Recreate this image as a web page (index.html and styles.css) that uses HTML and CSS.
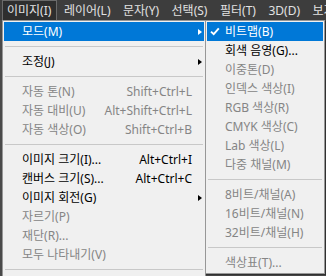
FILE: index.html
```html
<!DOCTYPE html>
<html lang="ko">
<head>
<meta charset="utf-8">
<link rel="stylesheet" href="styles.css">
</head>
<body>
<div class="app">
  <nav class="menubar">
    <span class="mb-item active">이미지(I)</span>
    <span class="mb-item">레이어(L)</span>
    <span class="mb-item">문자(Y)</span>
    <span class="mb-item">선택(S)</span>
    <span class="mb-item">필터(T)</span>
    <span class="mb-item">3D(D)</span>
    <span class="mb-item">보기(V)</span>
  </nav>
  <div class="workspace">
    <ul class="menu main">
      <li class="row hl"><span class="label">모드(M)</span><span class="key"></span><span class="arrow"></span></li>
      <li class="sep"></li>
      <li class="row"><span class="label">조정(J)</span><span class="key"></span><span class="arrow"></span></li>
      <li class="sep"></li>
      <li class="row dis"><span class="label">자동 톤(N)</span><span class="key">Shift+Ctrl+L</span><span></span></li>
      <li class="row dis"><span class="label">자동 대비(U)</span><span class="key">Alt+Shift+Ctrl+L</span><span></span></li>
      <li class="row dis"><span class="label">자동 색상(O)</span><span class="key">Shift+Ctrl+B</span><span></span></li>
      <li class="sep"></li>
      <li class="row"><span class="label">이미지 크기(I)...</span><span class="key">Alt+Ctrl+I</span><span></span></li>
      <li class="row"><span class="label">캔버스 크기(S)...</span><span class="key">Alt+Ctrl+C</span><span></span></li>
      <li class="row"><span class="label">이미지 회전(G)</span><span class="key"></span><span class="arrow"></span></li>
      <li class="row dis"><span class="label">자르기(P)</span><span class="key"></span><span></span></li>
      <li class="row dis"><span class="label">재단(R)...</span><span class="key"></span><span></span></li>
      <li class="row dis"><span class="label">모두 나타내기(V)</span><span class="key"></span><span></span></li>
      <li class="sep"></li>
    </ul>
    <ul class="menu sub">
      <li class="srow hl"><span class="check"><svg width="10" height="9" viewBox="0 0 10 9"><path d="M1 4.6 L3.7 7.2 L8.8 1.4" fill="none" stroke="#fff" stroke-width="1.9"/></svg></span><span class="label">비트맵(B)</span></li>
      <li class="srow"><span class="check"></span><span class="label">회색 음영(G)...</span></li>
      <li class="srow dis"><span class="check"></span><span class="label">이중톤(D)</span></li>
      <li class="srow dis"><span class="check"></span><span class="label">인덱스 색상(I)</span></li>
      <li class="srow dis"><span class="check"></span><span class="label">RGB 색상(R)</span></li>
      <li class="srow dis"><span class="check"></span><span class="label">CMYK 색상(C)</span></li>
      <li class="srow dis"><span class="check"></span><span class="label">Lab 색상(L)</span></li>
      <li class="srow dis"><span class="check"></span><span class="label">다중 채널(M)</span></li>
      <li class="sep"></li>
      <li class="srow dis"><span class="check"></span><span class="label">8비트/채널(A)</span></li>
      <li class="srow dis"><span class="check"></span><span class="label">16비트/채널(N)</span></li>
      <li class="srow dis"><span class="check"></span><span class="label">32비트/채널(H)</span></li>
      <li class="sep"></li>
      <li class="srow dis"><span class="check"></span><span class="label">색상표(T)...</span></li>
    </ul>
  </div>
</div>
</body>
</html>
```

FILE: styles.css
```css
html, body {
  margin: 0;
  padding: 0;
  overflow: hidden;
  width: 326px;
  height: 276px;
}

.app {
  font-family: "Noto Sans", "Noto Sans CJK KR", sans-serif;
  font-size: 12px;
  width: 326px;
  height: 276px;
  display: flex;
  flex-direction: column;
  background: #4a4a4a;
}

.menubar {
  height: 20px;
  flex: none;
  display: flex;
  align-items: stretch;
  background: #3d3d3d;
  color: #e2e2e2;
  padding-left: 2px;
  gap: 1px;
  white-space: nowrap;
  overflow: hidden;
}

.mb-item {
  display: flex;
  align-items: center;
  padding: 0 5px 0 4px;
  margin-right: 0.5px;
  line-height: 18px;
  border: 1px solid transparent;
  border-bottom: none;
}

.mb-item.active {
  background: #2e2e2e;
  border-color: #6a6a6a;
}

.workspace {
  position: relative;
  flex: 1;
  overflow: hidden;
}

.menu {
  list-style: none;
  margin: 0;
  padding: 1px;
  background: #f0f0f0;
  border: 1px solid #979797;
  position: absolute;
  top: 0;
  color: #000;
}

.main {
  left: 2px;
  width: 200px;
  padding-bottom: 24px;
}

.sub {
  left: 205px;
  width: 116px;
  box-shadow: 1px 1px 1px rgba(0, 0, 0, 0.35);
}

.row {
  display: grid;
  grid-template-columns: 1fr auto 12px;
  align-items: center;
  height: 19px;
  line-height: 19px;
  padding-left: 18px;
  white-space: nowrap;
}

.srow {
  display: grid;
  grid-template-columns: 18px 1fr;
  align-items: center;
  height: 19px;
  line-height: 19px;
  white-space: nowrap;
}

.check {
  display: flex;
  align-items: center;
  padding-left: 3px;
  height: 19px;
}

.hl {
  background: #0078d7;
  color: #fff;
}

.dis {
  color: #858585;
}

.arrow {
  display: block;
  width: 0;
  height: 0;
  margin-left: 6px;
  border-left: 4px solid #000;
  border-top: 3.5px solid transparent;
  border-bottom: 3.5px solid transparent;
}

.hl .arrow {
  border-left-color: #fff;
}

.sep {
  height: 1px;
  margin: 5px 1px 5px 1px;
  background: #c8c8c8;
}
```
